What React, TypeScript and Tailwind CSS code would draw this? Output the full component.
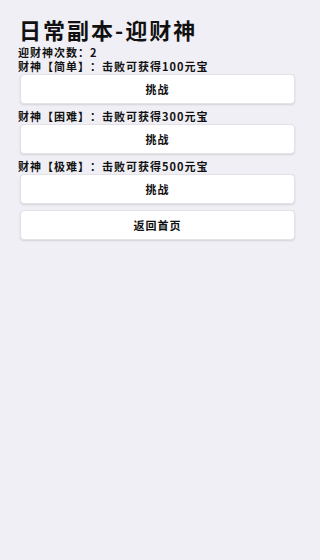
const font = { fontFamily: '"Noto Sans CJK SC", "Noto Sans", sans-serif' }

function Btn({ label, className = '' }: { label: string; className?: string }) {
    return (
        <button
            className={`mx-[2px] flex h-[30px] items-center justify-center rounded-[4px] border border-[#e2e2e7] bg-white text-[11px] font-bold tracking-[1px] text-[#111] shadow-[0_1px_2px_rgba(0,0,0,0.12)] ${className}`}
        >
            {label}
        </button>
    )
}

const label = 'text-[11px] font-bold leading-[14px] tracking-[1px] text-[#111]'

export default function App() {
    return (
        <div className="min-h-[560px] bg-[#f0eff5] px-[18px] pt-[16px] [text-spacing-trim:space-all]" style={font}>
            <h1 className="ml-[1px] text-[22px] font-bold leading-[27px] tracking-[2px] text-[#111]">日常副本-迎财神</h1>
            <p className={`mt-[2px] ${label}`}>迎财神次数：2</p>

            <p className={label}>财神【简单】：击败可获得100元宝</p>
            <Btn label="挑战" className="mt-[1px] w-[275px]" />

            <p className={`mt-[5px] ${label}`}>财神【困难】：击败可获得300元宝</p>
            <Btn label="挑战" className="mt-[1px] w-[275px]" />

            <p className={`mt-[5px] ${label}`}>财神【极难】：击败可获得500元宝</p>
            <Btn label="挑战" className="mt-[1px] w-[275px]" />

            <Btn label="返回首页" className="mt-[6px] w-[275px]" />
        </div>
    )
}
